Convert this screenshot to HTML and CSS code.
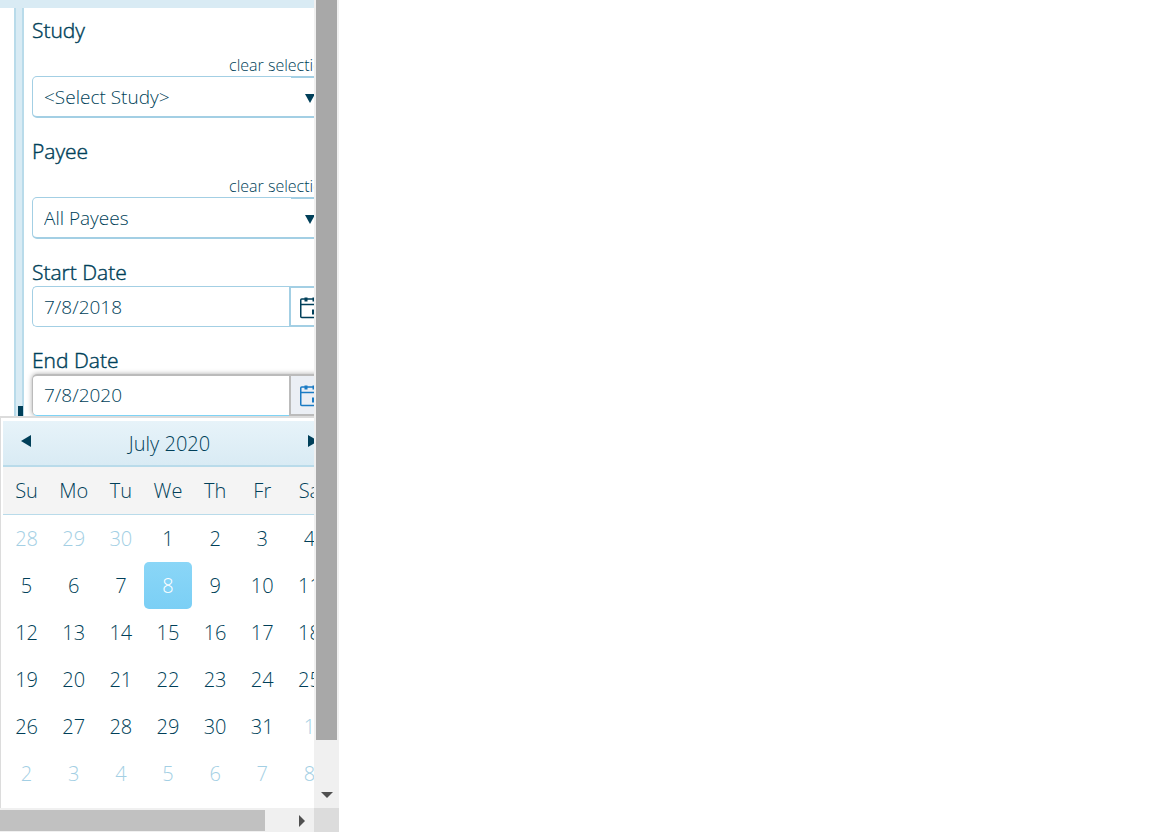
FILE: index.html
```html
<!doctype html>
<html lang="en">
<head>
  <meta charset="utf-8">
  <title>Report Filter</title>
  <meta name="viewport" content="width=device-width, initial-scale=1">
  <link rel="stylesheet" href="styles.css">
</head>
<body>
<div class="pane">
  <div class="pane-content">
    <div class="top-bar"></div>
    <div class="columns">
      <div class="splitter"><div class="splitter-handle"></div></div>
      <form class="filters">
        <div class="field">
          <label for="study">Study</label>
          <a class="clear" href="#">clear selection</a>
          <div class="select-box">
            <select id="study"><option>&lt;Select Study&gt;</option></select>
            <span class="caret caret-down"></span>
          </div>
        </div>
        <div class="field">
          <label for="payee">Payee</label>
          <a class="clear" href="#">clear selection</a>
          <div class="select-box">
            <select id="payee"><option>All Payees</option></select>
            <span class="caret caret-down"></span>
          </div>
        </div>
        <div class="field">
          <label for="start">Start Date</label>
          <div class="date-box">
            <input id="start" type="text" value="7/8/2018">
            <button type="button" aria-label="Pick start date">
              <svg width="20" height="22" viewBox="0 0 20 22" fill="none" stroke="currentColor" stroke-width="1.5">
                <rect x="0.75" y="2" width="18.5" height="18.5" rx="1"/>
                <path d="M1 7.5h18"/>
                <path d="M6 0.5v4M14 0.5v4" stroke-width="3"/>
                <path d="M12 12.5h5v5h-5z" fill="currentColor" stroke="none"/>
              </svg>
            </button>
          </div>
        </div>
        <div class="field">
          <label for="end">End Date</label>
          <div class="date-box active">
            <input id="end" type="text" value="7/8/2020">
            <button type="button" aria-label="Pick end date">
              <svg width="20" height="22" viewBox="0 0 20 22" fill="none" stroke="currentColor" stroke-width="1.5">
                <rect x="0.75" y="2" width="18.5" height="18.5" rx="1"/>
                <path d="M1 7.5h18"/>
                <path d="M6 0.5v4M14 0.5v4" stroke-width="3"/>
                <path d="M12 12.5h5v5h-5z" fill="currentColor" stroke="none"/>
              </svg>
            </button>
            <!-- calendar popup -->
            <div class="calendar">
              <div class="cal-header">
                <button type="button" aria-label="Previous month"><span class="caret caret-left"></span></button>
                <span>July 2020</span>
                <button type="button" aria-label="Next month"><span class="caret caret-right"></span></button>
              </div>
              <table>
                <thead>
                  <tr><th>Su</th><th>Mo</th><th>Tu</th><th>We</th><th>Th</th><th>Fr</th><th>Sa</th></tr>
                </thead>
                <tbody>
                  <tr><td class="other"><a href="#">28</a></td><td class="other"><a href="#">29</a></td><td class="other"><a href="#">30</a></td><td><a href="#">1</a></td><td><a href="#">2</a></td><td><a href="#">3</a></td><td><a href="#">4</a></td></tr>
                  <tr><td><a href="#">5</a></td><td><a href="#">6</a></td><td><a href="#">7</a></td><td class="selected"><a href="#">8</a></td><td><a href="#">9</a></td><td><a href="#">10</a></td><td><a href="#">11</a></td></tr>
                  <tr><td><a href="#">12</a></td><td><a href="#">13</a></td><td><a href="#">14</a></td><td><a href="#">15</a></td><td><a href="#">16</a></td><td><a href="#">17</a></td><td><a href="#">18</a></td></tr>
                  <tr><td><a href="#">19</a></td><td><a href="#">20</a></td><td><a href="#">21</a></td><td><a href="#">22</a></td><td><a href="#">23</a></td><td><a href="#">24</a></td><td><a href="#">25</a></td></tr>
                  <tr><td><a href="#">26</a></td><td><a href="#">27</a></td><td><a href="#">28</a></td><td><a href="#">29</a></td><td><a href="#">30</a></td><td><a href="#">31</a></td><td class="other"><a href="#">1</a></td></tr>
                  <tr><td class="other"><a href="#">2</a></td><td class="other"><a href="#">3</a></td><td class="other"><a href="#">4</a></td><td class="other"><a href="#">5</a></td><td class="other"><a href="#">6</a></td><td class="other"><a href="#">7</a></td><td class="other"><a href="#">8</a></td></tr>
                </tbody>
              </table>
            </div>
          </div>
        </div>
      </form>
    </div>
  </div>
  <div class="scroll-v">
    <div class="thumb"></div>
    <span class="arrow-down"></span>
  </div>
  <div class="scroll-h">
    <div class="thumb"></div>
    <span class="arrow-right"></span>
  </div>
  <div class="scroll-corner"></div>
</div>
</body>
</html>
```
FILE: styles.css
```css
* {
  box-sizing: border-box;
}
body {
  margin: 0;
  background: #fff;
  color: #003f59;
  font-family: "Open Sans", "Noto Sans", sans-serif;
  font-size: 19px;
  font-weight: 300;
}
a {
  color: inherit;
  text-decoration: none;
}
button,
input,
select {
  margin: 0;
  font: inherit;
  color: inherit;
  outline: none;
}

/* scrolling pane */
.pane {
  display: grid;
  grid-template-columns: 314px 25px;
  grid-template-rows: minmax(0, 1fr) 24px;
  width: max-content;
  height: 100vh;
}
.pane-content {
  display: flex;
  flex-direction: column;
  overflow: hidden;
}
.top-bar {
  flex: none;
  height: 8px;
  background: #d9ebf4;
}
.columns {
  display: flex;
  flex: 1;
  min-height: 0;
  padding-left: 14px;
}
.splitter {
  flex: none;
  width: 10px;
  padding: 398px 0 0 2px;
  background: #d9ebf4;
  border: solid #b9dbea;
  border-width: 0 2px;
}
.splitter-handle {
  width: 5px;
  height: 32px;
  background: #003f59;
}

/* filters */
.filters {
  flex: none;
  width: 308px;
  padding: 9px 0 0 8px;
}
.field {
  display: flex;
  flex-direction: column;
  margin-bottom: 20px;
}
.field label {
  font-size: 21px;
  line-height: 27px;
  -webkit-text-stroke: 1px #003f59;
  -webkit-text-stroke-width: thin;
}
.clear {
  align-self: flex-end;
  margin-top: 10px;
  font-size: 16px;
  line-height: 22px;
}
.select-box {
  position: relative;
}
.select-box select {
  display: block;
  width: 100%;
  height: 42px;
  padding: 0 11px;
  appearance: none;
  background: linear-gradient(#a3cfe4, #a3cfe4) no-repeat right top / 40px 1px #fff;
  border: 1px solid #a3cfe4;
  border-bottom-width: 2px;
  border-radius: 5px;
}
.caret {
  display: block;
  width: 0;
  height: 0;
  border: 0 solid transparent;
}
.caret-down {
  position: absolute;
  top: 18px;
  right: 17px;
  border-width: 9px 5px 0;
  border-top-color: #003f59;
}
.caret-left {
  border-width: 6px 10px 6px 0;
  border-right-color: #003f59;
}
.caret-right {
  border-width: 6px 0 6px 10px;
  border-left-color: #003f59;
}
.date-box {
  position: relative;
  display: flex;
  height: 41px;
}
.date-box > input {
  flex: 1;
  min-width: 0;
  padding: 0 11px;
  background: #fff;
  border: 1px solid #a3cfe4;
  border-right: 0;
  border-radius: 5px 0 0 5px;
}
.date-box > button {
  display: flex;
  align-items: center;
  justify-content: center;
  width: 43px;
  padding: 2px 1px 0 0;
  background: #fff;
  border: 2px solid #a3cfe4;
  border-radius: 0 5px 5px 0;
}
.date-box.active {
  height: 42px;
  border-radius: 5px;
  box-shadow: 0 0 5px #aaa;
}
.active > input {
  padding-bottom: 2px;
  border-color: #bbb;
  border-top-width: 2px;
  border-bottom-color: #7fd3f5;
}
.active > button {
  color: #1a7bc4;
  background: #ebeff5;
  border-color: #bbb;
}

/* calendar popup */
.calendar {
  position: absolute;
  top: 100%;
  left: -32px;
  padding: 3px 2px 16px;
  background: #fff;
  border: 1px solid #dcdcdc;
  border-top-width: 2px;
  font-size: 20px;
}
.cal-header {
  display: flex;
  align-items: center;
  justify-content: space-between;
  height: 46px;
  padding: 0 10px 0 13px;
  background: linear-gradient(#e7f3f9, #d9ebf4);
  border-bottom: 2px solid #b9dbea;
}
.cal-header button {
  padding: 0 5px 4px;
  background: none;
  border: 0;
}
.calendar table {
  width: 330px;
  table-layout: fixed;
  border-collapse: separate;
  border-spacing: 0;
}
.calendar th {
  height: 48px;
  padding: 0;
  font-weight: 300;
  background: #f4f4f4;
  border-bottom: 1px solid #b9dbea;
}
.calendar td {
  padding: 0;
  text-align: center;
}
.calendar td a {
  display: block;
  line-height: 47px;
}
.calendar .other {
  color: #a3cfe4;
}
.calendar .selected a {
  color: #fff;
  background: linear-gradient(#8ad6f7, #7bcff5);
  border-radius: 5px;
}

/* scrollbars */
.scroll-v {
  display: flex;
  flex-direction: column;
  align-items: center;
  justify-content: space-between;
  padding: 0 2px 10px;
  background: #f0f0f0;
}
.scroll-v .thumb {
  width: 100%;
  height: 740px;
  background: #a8a8a8;
}
.scroll-h {
  display: flex;
  align-items: center;
  justify-content: space-between;
  padding: 2px 9px 1px 0;
  background: #f0f0f0;
}
.scroll-h .thumb {
  width: 265px;
  height: 100%;
  background: #c1c1c1;
}
.arrow-down {
  border: 6px solid transparent;
  border-top-color: #505050;
  border-bottom: 0;
}
.arrow-right {
  border: 6px solid transparent;
  border-left-color: #505050;
  border-right: 0;
}
.scroll-corner {
  background: #dcdcdc;
}
```
